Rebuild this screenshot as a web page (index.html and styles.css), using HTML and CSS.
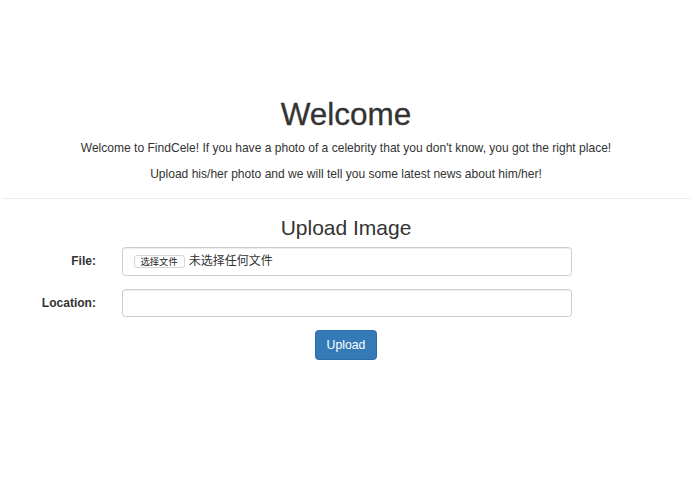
FILE: index.html
```html
<!DOCTYPE html>
<html lang="en">
<head>
<meta charset="utf-8">
<title>FindCele</title>
<link rel="stylesheet" href="styles.css">
</head>
<body>
<div class="page">
  <div class="intro">
    <h1 class="title">Welcome</h1>
    <p class="lead-line">Welcome to FindCele! If you have a photo of a celebrity that you don't know, you got the right place!</p>
    <p class="lead-line">Upload his/her photo and we will tell you some latest news about him/her!</p>
  </div>
  <hr class="divider">
  <div class="upload">
    <h3 class="subtitle">Upload Image</h3>
    <form class="form">
      <div class="row">
        <label class="label">File:</label>
        <div class="field file-field"><span class="file-btn">选择文件</span><span class="file-name">未选择任何文件</span></div>
      </div>
      <div class="row">
        <label class="label">Location:</label>
        <input class="field" type="text">
      </div>
      <div class="actions"><button class="btn" type="button">Upload</button></div>
    </form>
  </div>
</div>
</body>
</html>
```
FILE: styles.css
```css
html, body {
  margin: 0;
  padding: 0;
  background: #fff;
}
body {
  font-family: "Liberation Sans", Arial, "Noto Sans CJK SC", sans-serif;
  font-size: 12.05px;
  line-height: 17.5px;
  color: #333;
}
.page {
  margin: 0 5px 0 2px;
}
.intro {
  padding-top: 96.6px;
  text-align: center;
}
.title {
  margin: 0 0 8.75px;
  font-size: 31.5px;
  line-height: 34.65px;
  font-weight: normal;
  -webkit-text-stroke: 0.3px #333;
}
.lead-line {
  margin: 0 0 8.75px;
}
.lead-line:last-child {
  margin-bottom: 0;
}
.divider {
  margin: 14.3px 0 17.2px;
  border: 0;
  border-top: 1px solid #eee;
  height: 0;
}
.upload {
  text-align: center;
}
.subtitle {
  margin: 0 0 7.7px;
  font-size: 21px;
  line-height: 23.1px;
  font-weight: normal;
}
.form {
  margin: 0;
}
.row {
  display: grid;
  grid-template-columns: 94px 449.5px;
  column-gap: 26px;
  align-items: center;
  margin-bottom: 13px;
  text-align: left;
}
.row + .row {
  margin-bottom: 12.5px;
}
.label {
  text-align: right;
  font-weight: bold;
  padding-top: 1px;
}
.field {
  box-sizing: border-box;
  height: 28.5px;
  margin: 0;
  padding: 0 10.5px;
  border: 1px solid #ccc;
  border-radius: 3.5px;
  background: #fff;
  box-shadow: inset 0 1px 1px rgba(0,0,0,.075);
  font: inherit;
  color: #555;
}
.file-field {
  display: flex;
  align-items: center;
}
.file-btn {
  box-sizing: border-box;
  height: 13px;
  padding: 0 6px;
  border: 1px solid #d5d5d5;
  border-radius: 3px;
  background: #fdfdfd;
  font-family: "Noto Sans CJK SC", sans-serif;
  font-size: 9.3px;
  line-height: 11px;
  color: #222;
  display: flex;
  align-items: center;
}
.file-name {
  margin-left: 4px;
  font-family: "Noto Sans CJK SC", sans-serif;
  font-size: 12px;
  line-height: 14px;
  color: #333;
  position: relative;
  top: -1px;
}
.actions {
  text-align: center;
}
.btn {
  box-sizing: border-box;
  height: 30px;
  padding: 0 10.5px;
  border: 1px solid #2e6da4;
  border-radius: 3.5px;
  background: #337ab7;
  color: #fff;
  font: inherit;
  font-size: 12.25px;
  line-height: 29px;
  cursor: pointer;
}
```
